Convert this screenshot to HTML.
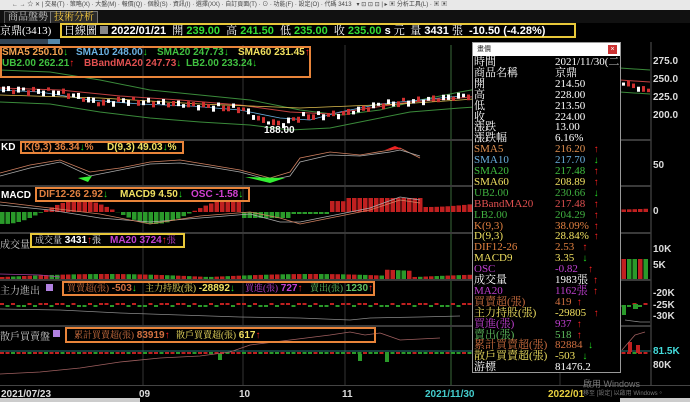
<!DOCTYPE html>
<html><head><meta charset="utf-8"><style>
*{margin:0;padding:0;box-sizing:border-box}
body{width:690px;height:402px;overflow:hidden;background:#000;position:relative;font-family:"Liberation Sans","Noto Sans CJK TC",sans-serif;color:#fff}
.a{position:absolute;white-space:nowrap}
.b{font-weight:bold;font-size:10px;line-height:11px}
.s{font-family:"Liberation Serif","Noto Serif CJK SC",serif;font-weight:normal}
.b .s{font-size:9px}
.box{position:absolute;border:2px solid #e8843a}
.ybox{position:absolute;border:2px solid #e8c83a}
.hl{position:absolute;left:0;width:651px;height:2px;background:#3a3a3a}
.ax{position:absolute;left:653px;font-weight:bold;font-size:10px;color:#ddd}
.up{color:#f22}.dn{color:#2d2}
#pop{position:absolute;left:472px;top:42px;width:149px;height:331px;background:#000;border:1px solid #999;overflow:hidden}
#pop .t{height:13px;background:#fff;color:#333;font-size:7px;padding:2px 4px;position:relative;line-height:9px}
#pop .x{position:absolute;right:3px;top:2px;width:9px;height:9px;background:#c33;color:#fff;font-size:7px;text-align:center;line-height:9px}
.r{position:absolute;left:1px;width:146px;height:11px;white-space:nowrap;font-size:11px;line-height:11px;font-family:"Liberation Serif","Noto Serif CJK SC",serif}
.r span{position:absolute;left:81px;top:0}
.r i{position:absolute;top:0;font-style:normal;font-size:10px;font-weight:bold}
</style></head><body>
<div class="a" style="left:0;top:0;width:690px;height:10px;background:#e8e8e8;color:#444;font-size:6px;line-height:10px;padding-left:12px">← → ☆ ✕ | 交易(T) · 策略(X) · 大盤(M) · 報價(Q) · 個股(S) · 資訊(I) · 選擇(XX) · 自訂頁面(T) · ⊙ · 功能(F) · 設定(O) · 代碼 3413 &nbsp; ▾ ⊡ ⊡ ⊡ | ▸ ▣ 分析工具(L) · ▣ ▣</div>
<div class="a" style="left:0;top:10px;width:690px;height:13px;background:#111"></div>
<div class="a s" style="left:4px;top:11px;height:12px;padding:0 3px;border:1px solid #555;border-bottom:0;font-size:10px;line-height:11px;color:#ccc;background:#1a1a1a">商品盤勢</div>
<div class="a s" style="left:50px;top:11px;height:12px;padding:0 3px;border:1px solid #777;border-bottom:0;font-size:10px;line-height:11px;color:#ffd040;background:#2a2a2a">技術分析</div>
<div class="a s" style="left:0;top:25px;font-size:11px;line-height:12px;color:#fff">京鼎(3413)</div>
<div class="ybox" style="left:60px;top:23px;width:516px;height:15px"></div>
<div class="a" style="left:64px;top:25px;font-size:11px;font-weight:bold;line-height:12px"><span class="s">日線圖</span> <span style="display:inline-block;width:8px;height:8px;background:#888"></span> 2022/01/21 &nbsp;<span class="s">開</span> <span style="color:#3d3">239.00</span> &nbsp;<span class="s">高</span> <span style="color:#3d3">241.50</span> &nbsp;<span class="s">低</span> <span style="color:#3d3">235.00</span> &nbsp;<span class="s">收</span> <span style="color:#3d3">235.00</span> s <span class="s">元 &nbsp;量</span> 3431 <span class="s">張</span> &nbsp;-10.50 (-4.28%)</div>
<div class="a" style="left:0;top:39px;width:60px;height:5px;background:#345"></div>
<div class="a" style="left:48px;top:39px;width:12px;height:5px;background:#58a"></div>

<svg class="a" style="left:0;top:0" width="690" height="402">
<g stroke="#3a6a3a" stroke-width="1"><line x1="451" y1="45" x2="451" y2="386"/></g>
<g stroke="#333" stroke-width="1"><line x1="143" y1="45" x2="143" y2="386"/><line x1="243" y1="45" x2="243" y2="386"/><line x1="345" y1="45" x2="345" y2="386"/><line x1="560" y1="45" x2="560" y2="386"/></g>
<line x1="651" y1="42" x2="651" y2="386" stroke="#555"/>
<polyline fill="none" stroke="#3a8a3a" points="0,70 50,72 100,80 150,90 200,95 250,100 300,110 340,115 380,110 420,100 460,92 500,85 560,72 620,68 650,70"/>
<polyline fill="none" stroke="#c04040" points="0,88 60,90 120,96 180,100 240,105 290,112 330,114 370,108 410,102 460,98 520,92 580,84 620,80 650,82"/>
<polyline fill="none" stroke="#3a8a3a" points="0,102 50,104 100,112 150,118 200,122 250,125 290,130 330,128 370,120 410,112 460,108 520,104 580,96 620,92 650,94"/>
<polyline fill="none" stroke="#6ab0e0" stroke-width=".8" points="0,90 40,92 90,100 140,104 190,106 240,110 280,118 310,120 340,112 380,104 420,100 460,96"/>
<polyline fill="none" stroke="#e0c050" stroke-width=".8" points="0,95 100,98 200,104 300,108 400,104 460,100 620,88"/>
<text x="264" y="133" fill="#fff" font-size="10" font-weight="bold" font-family="Liberation Sans">188.00</text>
<g id="cd"></g>
<polyline fill="none" stroke="#d08060" stroke-width=".8" points="0,173 30,165 60,160 90,172 120,168 150,162 180,160 210,165 240,170 270,178 290,172 300,158 330,152 360,155 390,150 400,148 420,158"/>
<polyline fill="none" stroke="#aaa" stroke-width=".8" points="0,176 30,168 60,162 90,176 120,170 150,164 180,163 210,167 240,172 270,180 290,176 300,162 330,155 360,156 390,152 400,150 420,156"/>
<path d="M78,178 L88,182 L92,176Z M245,177 L270,183 L285,178Z" fill="#3e3"/>
<path d="M385,150 L395,146 L402,149Z" fill="#e22"/>
<g id="mb"></g>
<polyline fill="none" stroke="#aaa" stroke-width=".8" points="0,205 50,210 100,218 150,222 200,218 250,214 280,222 300,222 330,216 370,208 400,197 420,200"/>
<polyline fill="none" stroke="#d08060" stroke-width=".8" points="0,202 50,208 100,214 150,224 200,216 250,212 280,218 300,224 330,218 370,210 400,200 420,203"/>
<g id="vb"></g>
<polyline fill="none" stroke="#a040a0" stroke-width=".8" points="0,274 40,275 60,277"/>
<g id="m1"></g>
<polyline fill="none" stroke="#888" stroke-width=".8" points="0,309 60,310 120,313 180,315 240,317 300,318 350,320 370,318 420,317 460,316"/>
<polyline fill="none" stroke="#888" stroke-width=".8" points="625,320 640,322 650,322"/>
<line x1="0" y1="351" x2="651" y2="351" stroke="#2a7a7a"/>
<g id="m2"></g>
<polyline fill="none" stroke="#a06060" stroke-width=".8" points="0,374 40,372 80,368 120,362 160,358 200,356 230,352 250,345 290,340 330,335 350,332 365,335 380,333 400,340 440,338"/>
<polyline fill="none" stroke="#a06060" stroke-width=".8" points="622,350 635,335 645,332"/>
</svg>
<div class="hl" style="top:139px"></div><div class="hl" style="top:185px"></div><div class="hl" style="top:232px"></div><div class="hl" style="top:279px"></div><div class="hl" style="top:325px"></div>
<div class="a" style="left:0;top:385px;width:690px;height:1px;background:#444"></div>

<div class="box" style="left:0;top:46px;width:311px;height:32px"></div>
<div class="a b" style="left:2px;top:47px;color:#f0a050">SMA5 250.10<span class="dn">↓</span></div>
<div class="a b" style="left:76px;top:47px;color:#6ab0e0">SMA10 248.00<span class="dn">↓</span></div>
<div class="a b" style="left:157px;top:47px;color:#40c040">SMA20 247.73<span class="dn">↓</span></div>
<div class="a b" style="left:238px;top:47px;color:#f0e060">SMA60 231.45<span class="up">↑</span></div>
<div class="a b" style="left:2px;top:58px;color:#40c040">UB2.00 262.21<span class="up">↑</span></div>
<div class="a b" style="left:84px;top:58px;color:#e05050">BBandMA20 247.73<span class="dn">↓</span></div>
<div class="a b" style="left:186px;top:58px;color:#40c040">LB2.00 233.24<span class="dn">↓</span></div>

<div class="a b" style="left:1px;top:142px">KD</div>
<div class="box" style="left:20px;top:141px;width:164px;height:13px"></div>
<div class="a b" style="left:24px;top:142px;color:#e08040">K(9,3) 36.34<span class="dn">↓</span>%</div>
<div class="a b" style="left:107px;top:142px;color:#f0e060">D(9,3) 49.03<span class="dn">↓</span>%</div>

<div class="a b" style="left:1px;top:190px">MACD</div>
<div class="box" style="left:35px;top:187px;width:215px;height:15px"></div>
<div class="a b" style="left:39px;top:189px;color:#e08040">DIF12-26 2.92<span class="dn">↓</span></div>
<div class="a b" style="left:120px;top:189px;color:#f0e060">MACD9 4.50<span class="dn">↓</span></div>
<div class="a b" style="left:191px;top:189px;color:#d040d0">OSC -1.58<span class="dn">↓</span></div>

<div class="a s" style="left:0;top:236px;font-size:10px;color:#ccc">成交量</div>
<div class="ybox" style="left:30px;top:233px;width:155px;height:15px"></div>
<div class="a b" style="left:35px;top:235px;color:#fff"><span class="s" style="color:#ddd">成交量</span> 3431<span class="up">↑</span><span class="s">張</span></div>
<div class="a b" style="left:110px;top:235px;color:#c040d0">MA20 3724<span class="up">↑</span><span class="s">張</span></div>

<div class="a s" style="left:0;top:282px;font-size:10px;color:#ccc">主力進出</div>
<div class="a" style="left:46px;top:284px;width:7px;height:7px;background:#b080e0"></div>
<div class="box" style="left:62px;top:281px;width:313px;height:15px"></div>
<div class="a b" style="left:67px;top:283px;color:#d07040"><span class="s">買賣超(張)</span> -503<span class="dn">↓</span></div>
<div class="a b" style="left:145px;top:283px;color:#f0e060"><span class="s">主力持股(張)</span> -28892<span class="dn">↓</span></div>
<div class="a b" style="left:245px;top:283px;color:#c040d0"><span class="s">買進(張)</span> 727<span class="up">↑</span></div>
<div class="a b" style="left:310px;top:283px;color:#60c060"><span class="s">賣出(張)</span> 1230<span class="up">↑</span></div>

<div class="a s" style="left:0;top:328px;font-size:10px;color:#ccc">散戶買賣盤</div>
<div class="a" style="left:53px;top:330px;width:7px;height:7px;background:#b080e0"></div>
<div class="box" style="left:65px;top:327px;width:311px;height:16px"></div>
<div class="a b" style="left:74px;top:330px;color:#d07040"><span class="s">累計買賣超(張)</span> 83919<span class="up">↑</span></div>
<div class="a b" style="left:176px;top:330px;color:#f0e060"><span class="s">散戶買賣超(張)</span> 617<span class="up">↑</span></div>

<div class="ax" style="top:56px">275.0</div><div class="ax" style="top:74px">250.0</div><div class="ax" style="top:92px">225.0</div><div class="ax" style="top:110px">200.0</div>
<div class="ax" style="top:160px">50</div><div class="ax" style="top:206px">0</div>
<div class="ax" style="top:244px">10K</div><div class="ax" style="top:260px">5K</div>
<div class="ax" style="top:288px">-20K</div><div class="ax" style="top:300px">-25K</div><div class="ax" style="top:311px">-30K</div>
<div class="ax" style="top:346px;color:#4dd">81.5K</div><div class="ax" style="top:360px">80K</div>

<div class="a b" style="left:1px;top:389px;color:#ddd">2021/07/23</div>
<div class="a b" style="left:139px;top:389px;color:#ddd">09</div>
<div class="a b" style="left:239px;top:389px;color:#ddd">10</div>
<div class="a b" style="left:342px;top:389px;color:#ddd">11</div>
<div class="a b" style="left:425px;top:389px;color:#4cc">2021/11/30</div>
<div class="a b" style="left:548px;top:389px;color:#e8d040">2022/01</div>
<div class="a" style="left:583px;top:377px;font-size:9px;color:#777">啟用 Windows</div>
<div class="a" style="left:583px;top:388px;font-size:6px;color:#777">移至 [設定] 以啟用 Windows。</div>
<div class="a" style="left:0;top:398px;width:140px;height:4px;background:#ccc"></div>
<div class="a" style="left:620px;top:398px;width:70px;height:4px;background:#ccc"></div>

<div id="pop"><div class="t">畫價<div class="x">×</div></div><div id="rows"></div></div>

<script>
var NS="http://www.w3.org/2000/svg";
function R(g,x,y,w,h,c){var r=document.createElementNS(NS,"rect");r.setAttribute("x",x);r.setAttribute("y",y);r.setAttribute("width",w);r.setAttribute("height",h);r.setAttribute("fill",c);document.getElementById(g).appendChild(r);}
function py(x){var p=[[0,89],[60,92],[100,103],[120,100],[180,104],[240,108],[260,120],[280,124],[300,116],[340,114],[380,104],[420,100],[460,96],[540,84],[600,82],[620,82],[640,88]];for(var i=1;i<p.length;i++)if(x<=p[i][0]){var t=(x-p[i-1][0])/(p[i][0]-p[i-1][0]);return p[i-1][1]+t*(p[i][1]-p[i-1][1]);}return 90;}
for(var x=2;x<648;x+=5){if(x>470&&x<622)continue;var y=py(x)+(Math.sin(x*1.7)*2);var c=Math.sin(x*0.9)>0?"#fff":"#d03030";R("cd",x,y-2,3,3+Math.abs(Math.sin(x))*3,c);}
for(var x=0;x<648;x+=5.5){var v=Math.sin((x-40)/75*Math.PI)*-12;if(x>290)v=(x<330?2:-8+Math.sin(x/30)*3);if(x>345&&x<420)v=-14;if(x>240&&x<290)v=6;var c=v<0?"#c02020":"#2a9a2a";if(x>560)v=v*0.5;R("mb",x,v<0?212+v:212,4.5,Math.abs(v),c);}
for(var x=0;x<648;x+=5.5){var h=2+Math.abs(Math.sin(x*2.3))*3;if(x>380&&x<410)h+=6;if(x>620)h=20;R("vb",x,279-h,4.5,h,Math.sin(x*3.1)>0?"#2a9a2a":"#c02020");}
for(var x=0;x<648;x+=5.5){var s=Math.sin(x*2.7);R("m1",x,s>0?305:303,4,2,s>0?"#2a9a2a":"#c02020");}
R("m1",622,305,4,10,"#2a9a2a");R("m1",633,304,5,5,"#2a9a2a");
for(var x=0;x<648;x+=5.5){var s=Math.sin(x*1.9);R("m2",x,352,4,2,s>0?"#2a9a2a":"#c02020");}
R("m2",218,354,4,6,"#2a9a2a");R("m2",358,354,4,7,"#2a9a2a");R("m2",385,354,4,8,"#2a9a2a");R("m2",628,342,4,10,"#c02020");R("m2",636,345,4,8,"#c02020");
var rows=[["時間","#fff","2021/11/30(二)","#fff",""],["商品名稱","#fff","京鼎","#fff",""],["開","#fff","214.50","#fff",""],["高","#fff","228.00","#fff",""],["低","#fff","213.50","#fff",""],["收","#fff","224.00","#fff",""],["漲跌","#fff","13.00","#fff",""],["漲跌幅","#fff","6.16%","#fff",""],
["SMA5","#e09050","216.20","#e09050","u"],["SMA10","#6ab0e0","217.70","#6ab0e0","d"],["SMA20","#40c040","217.48","#40c040","u"],["SMA60","#f0e060","208.89","#f0e060","u"],["UB2.00","#40b040","230.66","#40b040","d"],["BBandMA20","#e05050","217.48","#e05050","u"],["LB2.00","#40b040","204.29","#40b040","u"],["K(9,3)","#e08040","38.09%","#e08040","u"],["D(9,3)","#f0e060","28.84%","#f0e060","u"],["DIF12-26","#e08040","2.53","#e08040","u"],["MACD9","#f0e060","3.35","#f0e060","d"],["OSC","#c040d0","-0.82","#c040d0","u"],["成交量","#fff","1983張","#fff","u"],["MA20","#c040d0","1162張","#c040d0","u"],["買賣超(張)","#d07040","419","#d07040","u"],["主力持股(張)","#f0e060","-29805","#f0e060","u"],["買進(張)","#c040d0","937","#c040d0","u"],["賣出(張)","#60c060","518","#60c060","u"],["累計買賣超(張)","#d07040","82884","#d07040","d"],["散戶買賣超(張)","#f0e060","-503","#f0e060","d"],["游標","#fff","81476.2","#fff",""]];
var h="";rows.forEach(function(r,i){var ar="";if(r[4]){var w=r[2].length*5.6+86;if(/張/.test(r[2]))w+=5;ar='<i style="left:'+w+'px;color:'+(r[4]=="u"?"#f22":"#2d2")+'">'+(r[4]=="u"?"↑":"↓")+'</i>';}h+='<div class="r" style="top:'+(14+i*10.9)+'px;color:'+r[1]+'">'+r[0]+'<span style="color:'+r[3]+'">'+r[2]+'</span>'+ar+'</div>';});
document.getElementById("rows").innerHTML=h;
</script>
</body></html>
